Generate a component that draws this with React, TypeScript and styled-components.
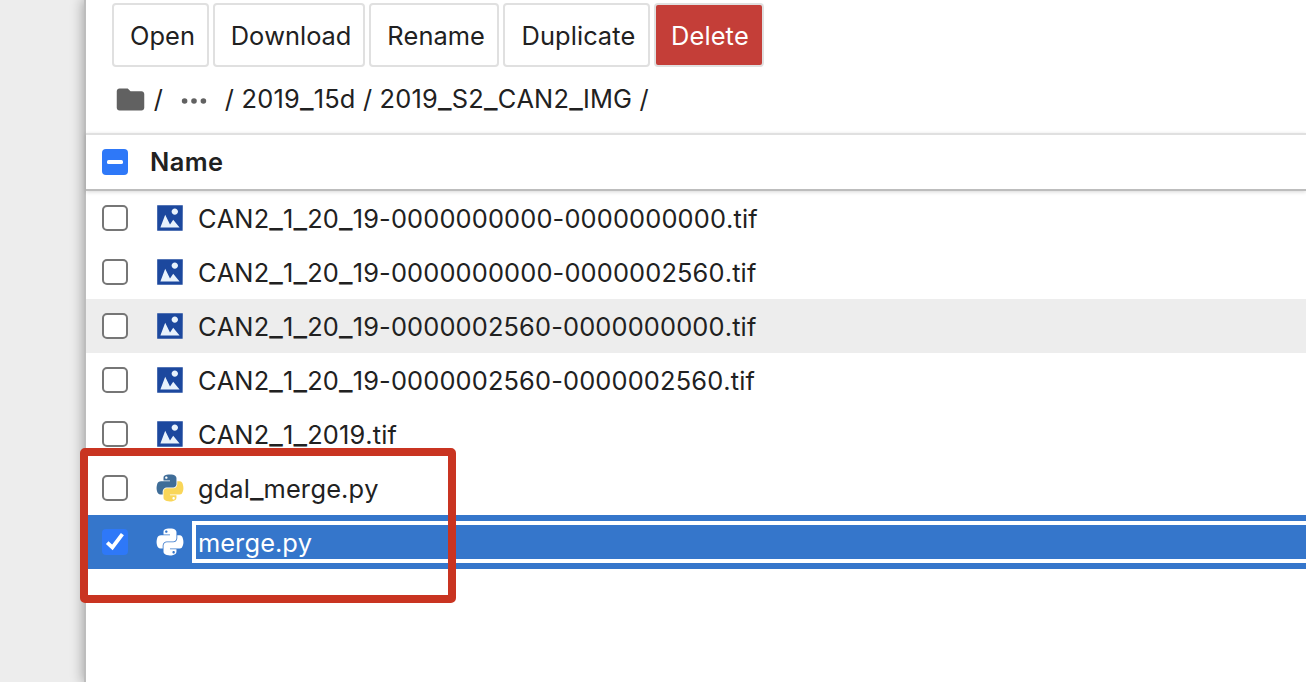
import React from 'react';
import styled, { createGlobalStyle } from 'styled-components';

const GlobalStyle = createGlobalStyle`
  * { box-sizing: border-box; }
  html, body { margin: 0; height: 100%; overflow: hidden; background: #ededed; }
`;

const Page = styled.div`
  position: relative;
  display: flex;
  width: 100%;
  height: 100vh;
  overflow: hidden;
  background: #ededed;
  color: #212121;
  font-family: Inter, 'Liberation Sans', sans-serif;
  font-size: 25.4px;
  line-height: 32px;
  font-kerning: none;
`;

const Gutter = styled.div`
  flex: 0 0 84px;
  background: #ededed;
`;

const Browser = styled.main`
  flex: 1;
  min-width: 0;
  border-left: 2px solid #bdbdbd;
  background: #fff;
  box-shadow: 0 0 12px 1px rgba(0, 0, 0, 0.32);
`;

const Toolbar = styled.div`
  display: flex;
  gap: 4px;
  padding: 3px 0 0 26px;
`;

const ToolButton = styled.button<{ $width: number; $danger?: boolean }>`
  width: ${(p) => p.$width}px;
  height: 64px;
  padding: 2px 0 0 ${(p) => (p.$danger ? 2 : 4)}px;
  border: 2px solid #e0e0e0;
  border-radius: 4px;
  background: ${(p) => (p.$danger ? '#c43e38' : '#fff')};
  color: ${(p) => (p.$danger ? '#fff' : '#212121')};
  font: inherit;
  white-space: nowrap;
`;

const Label = styled.span<{ $spacing?: number }>`
  letter-spacing: ${(p) => p.$spacing ?? 0}px;
  white-space: pre;
`;

const WideUnderscore = styled.span`
  font-size: 1.17em;
  line-height: 0;
  vertical-align: 0.5px;
`;

const Crumbs = styled.nav`
  display: flex;
  align-items: center;
  height: 66px;
  padding: 0 0 2px 27.5px;
`;

const CrumbDots = styled.span`
  display: flex;
  padding: 4px 17.5px 0 18.5px;
`;

const Header = styled.div`
  display: flex;
  align-items: center;
  gap: 22px;
  height: 58px;
  padding-left: 16px;
  border-top: 2px solid #e0e0e0;
  border-bottom: 2px solid #bdbdbd;
  box-shadow: 0 1px 4px rgba(0, 0, 0, 0.16);
  font-weight: 600;
`;

const Row = styled.div<{ $state?: 'hover' | 'selected' }>`
  display: flex;
  align-items: center;
  height: 54px;
  padding-left: 16px;
  background: ${(p) => (p.$state === 'selected' ? '#3576cb' : p.$state === 'hover' ? '#ededed' : 'transparent')};
  color: ${(p) => (p.$state === 'selected' ? '#fff' : '#212121')};
`;

const FileName = styled(Label)`
  padding-top: 2px;
`;

const Check = styled.span<{ $on?: boolean }>`
  display: grid;
  place-items: center;
  flex: none;
  width: 26px;
  height: 26px;
  border: ${(p) => (p.$on ? 'none' : '2px solid #767676')};
  border-radius: ${(p) => (p.$on ? 4 : 5)}px;
  background: ${(p) => (p.$on ? '#2e78f8' : '#fff')};
`;

const FileIcon = styled.span`
  display: flex;
  flex: none;
  margin: 0 12px 0 26px;
`;

const NameField = styled.div`
  display: flex;
  align-items: center;
  flex: 1;
  height: 42px;
  margin: 0 -8px 0 -6px;
  padding-left: 2px;
  border: 4px solid #fff;
`;

const Highlight = styled.div`
  position: absolute;
  left: 80px;
  top: 448px;
  width: 376px;
  height: 155px;
  border: 8px solid #c93421;
  border-radius: 5px;
`;

const PathText = ({ text }: { text: string }) => (
  <>
    {text.split('_').map((part, i) => (
      <React.Fragment key={i}>
        {i > 0 && <WideUnderscore>_</WideUnderscore>}
        {part}
      </React.Fragment>
    ))}
  </>
);

const ImageIcon = () => (
  <svg width="32" height="32" viewBox="0 0 22 22">
    <path fill="#e8f2fc" d="M3 3h16v16H3z" />
    <path
      fill="#1c489e"
      d="M2.2 2.2v17.5h17.5l.1-17.5H2.2zm12.1 2.2c1.2 0 2.2 1 2.2 2.2s-1 2.2-2.2 2.2-2.2-1-2.2-2.2 1-2.2 2.2-2.2zM4.4 17.6l3.3-8.8 3.3 6.6 2.2-3.2 4.4 5.4H4.4z"
    />
  </svg>
);

const PythonIcon = ({ top, bottom }: { top: string; bottom: string }) => (
  <svg width="32" height="32" viewBox="-10 -10 131.16 132.39">
    <path
      fill={top}
      d="M54.919 0C50.335.022 45.958.413 42.106 1.095 30.76 3.099 28.7 7.295 28.7 15.032v10.219h26.813v3.406H18.638c-7.793 0-14.616 4.684-16.75 13.594-2.462 10.213-2.571 16.586 0 27.25 1.906 7.938 6.457 13.594 14.25 13.594h9.218v-12.25c0-8.85 7.658-16.657 16.75-16.657h26.782c7.455 0 13.406-6.138 13.406-13.625V15.032c0-7.266-6.13-12.725-13.406-13.937C64.282.328 59.502-.02 54.919 0zm-14.5 8.22c2.769 0 5.031 2.298 5.031 5.125 0 2.816-2.262 5.093-5.031 5.093-2.78 0-5.032-2.277-5.032-5.093 0-2.827 2.252-5.125 5.032-5.125z"
    />
    <path
      fill={bottom}
      d="M85.638 28.657v11.906c0 9.231-7.826 17-16.75 17H42.106c-7.336 0-13.406 6.279-13.406 13.625V96.72c0 7.266 6.319 11.54 13.406 13.625 8.488 2.496 16.627 2.947 26.782 0 6.75-1.954 13.406-5.888 13.406-13.625V86.501H55.513v-3.406H95.7c7.793 0 10.696-5.436 13.406-13.594 2.8-8.399 2.68-16.476 0-27.25-1.925-7.757-5.604-13.594-13.406-13.594zM70.575 93.313c2.78 0 5.031 2.278 5.031 5.094 0 2.826-2.251 5.125-5.031 5.125-2.77 0-5.031-2.299-5.031-5.125 0-2.816 2.262-5.094 5.031-5.094z"
    />
  </svg>
);

const FolderIcon = () => (
  <svg width="33" height="33" viewBox="0 0 24 24" fill="#616161">
    <path d="M10 4H4c-1.1 0-1.99.9-1.99 2L2 18c0 1.1.9 2 2 2h16c1.1 0 2-.9 2-2V8c0-1.1-.9-2-2-2h-8l-2-2z" />
  </svg>
);

const DotsIcon = () => (
  <svg width="26" height="8" viewBox="0 0 26 8" fill="#616161">
    <circle cx="3.6" cy="4" r="2.8" />
    <circle cx="13" cy="4" r="2.8" />
    <circle cx="22.4" cy="4" r="2.8" />
  </svg>
);

const TickIcon = () => (
  <svg width="26" height="26" viewBox="0 0 26 26" fill="none" stroke="#fff" strokeWidth="3.8">
    <path d="M5.2 13.6 10.4 18.4 20.4 5.2" />
  </svg>
);

const DashIcon = () => (
  <svg width="26" height="26" viewBox="0 0 26 26">
    <rect x="5" y="11" width="16" height="4" rx="1.6" fill="#fff" />
  </svg>
);

const actions = [
  { label: 'Open', width: 97, spacing: 0.1 },
  { label: 'Download', width: 152, spacing: 0 },
  { label: 'Rename', width: 130, spacing: 0 },
  { label: 'Duplicate', width: 147, spacing: 0.1 },
  { label: 'Delete', width: 110, spacing: 0.1, danger: true },
];

const images = [
  { name: 'CAN2_1_20_19-0000000000-0000000000.tif' },
  { name: 'CAN2_1_20_19-0000000000-0000002560.tif' },
  { name: 'CAN2_1_20_19-0000002560-0000000000.tif', hover: true },
  { name: 'CAN2_1_20_19-0000002560-0000002560.tif' },
  { name: 'CAN2_1_2019.tif' },
];

export default function App() {
  return (
    <Page>
      <GlobalStyle />
      <Gutter />
      <Browser>
        <Toolbar>
          {actions.map((a) => (
            <ToolButton key={a.label} $width={a.width} $danger={a.danger}>
              <Label $spacing={a.spacing}>{a.label}</Label>
            </ToolButton>
          ))}
        </Toolbar>
        <Crumbs>
          <FolderIcon />
          <Label>{' /'}</Label>
          <CrumbDots>
            <DotsIcon />
          </CrumbDots>
          <Label $spacing={0.2}>
            <PathText text="/ 2019_15d / 2019_S2_CAN2_IMG /" />
          </Label>
        </Crumbs>
        <Header>
          <Check $on>
            <DashIcon />
          </Check>
          <Label $spacing={0.4}>Name</Label>
        </Header>
        {images.map((f) => (
          <Row key={f.name} $state={f.hover ? 'hover' : undefined}>
            <Check />
            <FileIcon>
              <ImageIcon />
            </FileIcon>
            <FileName $spacing={0.15}>
              <PathText text={f.name} />
            </FileName>
          </Row>
        ))}
        <Row>
          <Check />
          <FileIcon>
            <PythonIcon top="#3f6d98" bottom="#f9d659" />
          </FileIcon>
          <FileName $spacing={0.1}>
            <PathText text="gdal_merge.py" />
          </FileName>
        </Row>
        <Row $state="selected">
          <Check $on>
            <TickIcon />
          </Check>
          <FileIcon>
            <PythonIcon top="#fff" bottom="#fff" />
          </FileIcon>
          <NameField>
            <FileName>merge.py</FileName>
          </NameField>
        </Row>
      </Browser>
      <Highlight />
    </Page>
  );
}
